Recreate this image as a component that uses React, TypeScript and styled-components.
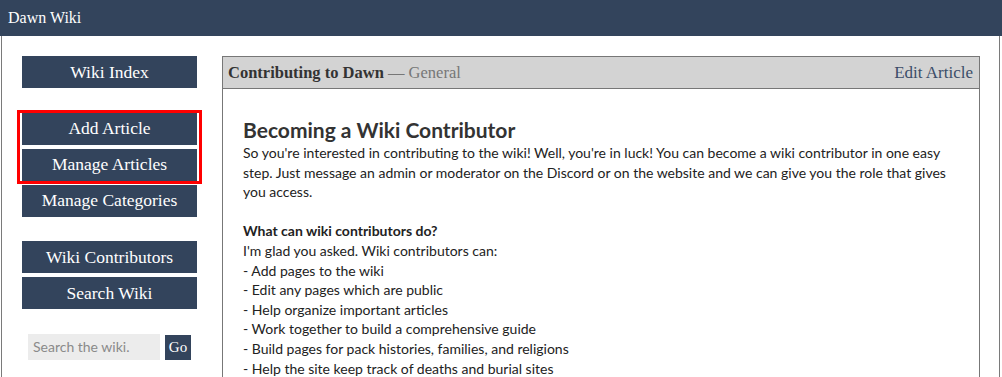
import styled, { createGlobalStyle } from "styled-components";

const GlobalStyle = createGlobalStyle`
  body {
    margin: 0;
    background: #fff;
    font-family: Lato, "Liberation Sans", sans-serif;
    color: #333;
  }
`;

const slate = "#33445c";

const TopBar = styled.div`
  height: 36px;
  background: ${slate};
  color: #fff;
  font-family: "Liberation Serif", serif;
  font-size: 16px;
  display: flex;
  align-items: center;
  padding-left: 8px;
`;

const Wrapper = styled.div`
  margin: 0 2px 0 1px;
  border-left: 1px solid #7a7a7a;
  border-right: 1px solid #7a7a7a;
  padding: 20px 19px 0 20px;
  display: grid;
  grid-template-columns: 175px 1fr;
  column-gap: 25px;
  align-items: start;
  min-height: 341px;
  box-sizing: border-box;
`;

const Sidebar = styled.nav`
  display: flex;
  flex-direction: column;
`;

const NavGroup = styled.div<{ $first?: boolean }>`
  display: flex;
  flex-direction: column;
  gap: 4px;
  margin-top: ${p => (p.$first ? "0" : "24.5px")};
`;

// red annotation box drawn over the two buttons, doesn't affect layout
const Highlight = styled.div`
  position: relative;
  display: flex;
  flex-direction: column;
  gap: 4px;
  &::after {
    content: "";
    position: absolute;
    inset: -3px -5px;
    border: 3px solid #ff0000;
    pointer-events: none;
  }
`;

const NavButton = styled.a`
  display: flex;
  align-items: center;
  justify-content: center;
  height: 32px;
  background: ${slate};
  color: #fff;
  font-family: "Liberation Serif", serif;
  font-size: 17.5px;
  text-decoration: none;
`;

const SearchForm = styled.form`
  display: flex;
  justify-content: center;
  align-items: flex-start;
  gap: 5px;
  margin-top: 24.5px;
`;

const SearchInput = styled.input`
  width: 132px;
  height: 26px;
  box-sizing: border-box;
  border: none;
  background: #ececec;
  padding: 0 5px;
  font-family: Lato, sans-serif;
  font-size: 14px;
  color: #333;
  &::placeholder {
    color: #8a8a8a;
  }
`;

const GoButton = styled.button`
  width: 26px;
  height: 25px;
  margin-top: 1px;
  border: none;
  padding: 0;
  background: ${slate};
  color: #fff;
  font-family: "Liberation Serif", serif;
  font-size: 15px;
`;

const Panel = styled.section`
  border: 1px solid #777;
  border-bottom: none;
`;

const PanelHeader = styled.div`
  height: 31px;
  background: #d3d3d3;
  border-bottom: 1px solid #777;
  display: flex;
  align-items: center;
  justify-content: space-between;
  padding: 0 6px 0 5px;
  font-family: "Liberation Serif", serif;
  font-size: 16.5px;
`;

const Title = styled.span`
  color: #333;
  font-weight: bold;
`;

const Category = styled.span`
  color: #777;
  font-weight: normal;
`;

const EditLink = styled.a`
  color: #3b4d68;
  font-size: 17px;
  text-decoration: none;
`;

const Body = styled.div`
  padding: 28px 16px 20px 20px;
  font-size: 14px;
  line-height: 1.4;
  color: #222;
`;

const Heading = styled.h2`
  margin: 0;
  font-size: 21px;
  line-height: 26px;
  font-weight: bold;
  color: #333;
`;

const Para = styled.p`
  margin: 0;
`;

const items = [
  "Add pages to the wiki",
  "Edit any pages which are public",
  "Help organize important articles",
  "Work together to build a comprehensive guide",
  "Build pages for pack histories, families, and religions",
  "Help the site keep track of deaths and burial sites",
];

export default function App() {
  return (
    <>
      <GlobalStyle />
      <TopBar>Dawn Wiki</TopBar>
      <Wrapper>
        <Sidebar>
          <NavGroup $first>
            <NavButton>Wiki Index</NavButton>
          </NavGroup>
          <NavGroup>
            <Highlight>
              <NavButton>Add Article</NavButton>
              <NavButton>Manage Articles</NavButton>
            </Highlight>
            <NavButton>Manage Categories</NavButton>
          </NavGroup>
          <NavGroup>
            <NavButton>Wiki Contributors</NavButton>
            <NavButton>Search Wiki</NavButton>
          </NavGroup>
          <SearchForm onSubmit={e => e.preventDefault()}>
            <SearchInput placeholder="Search the wiki." />
            <GoButton>Go</GoButton>
          </SearchForm>
        </Sidebar>
        <Panel>
          <PanelHeader>
            <span>
              <Title>Contributing to Dawn</Title> <Category>— General</Category>
            </span>
            <EditLink>Edit Article</EditLink>
          </PanelHeader>
          <Body>
            <Heading>Becoming a Wiki Contributor</Heading>
            <Para>
              So you're interested in contributing to the wiki! Well, you're in luck! You can become a wiki
              contributor in one easy step. Just message an admin or moderator on the Discord or on the website
              and we can give you the role that gives you access.
            </Para>
            <br />
            <Para>
              <b>What can wiki contributors do?</b>
            </Para>
            <Para>I'm glad you asked. Wiki contributors can:</Para>
            {items.map(item => (
              <Para key={item}>- {item}</Para>
            ))}
          </Body>
        </Panel>
      </Wrapper>
    </>
  );
}
